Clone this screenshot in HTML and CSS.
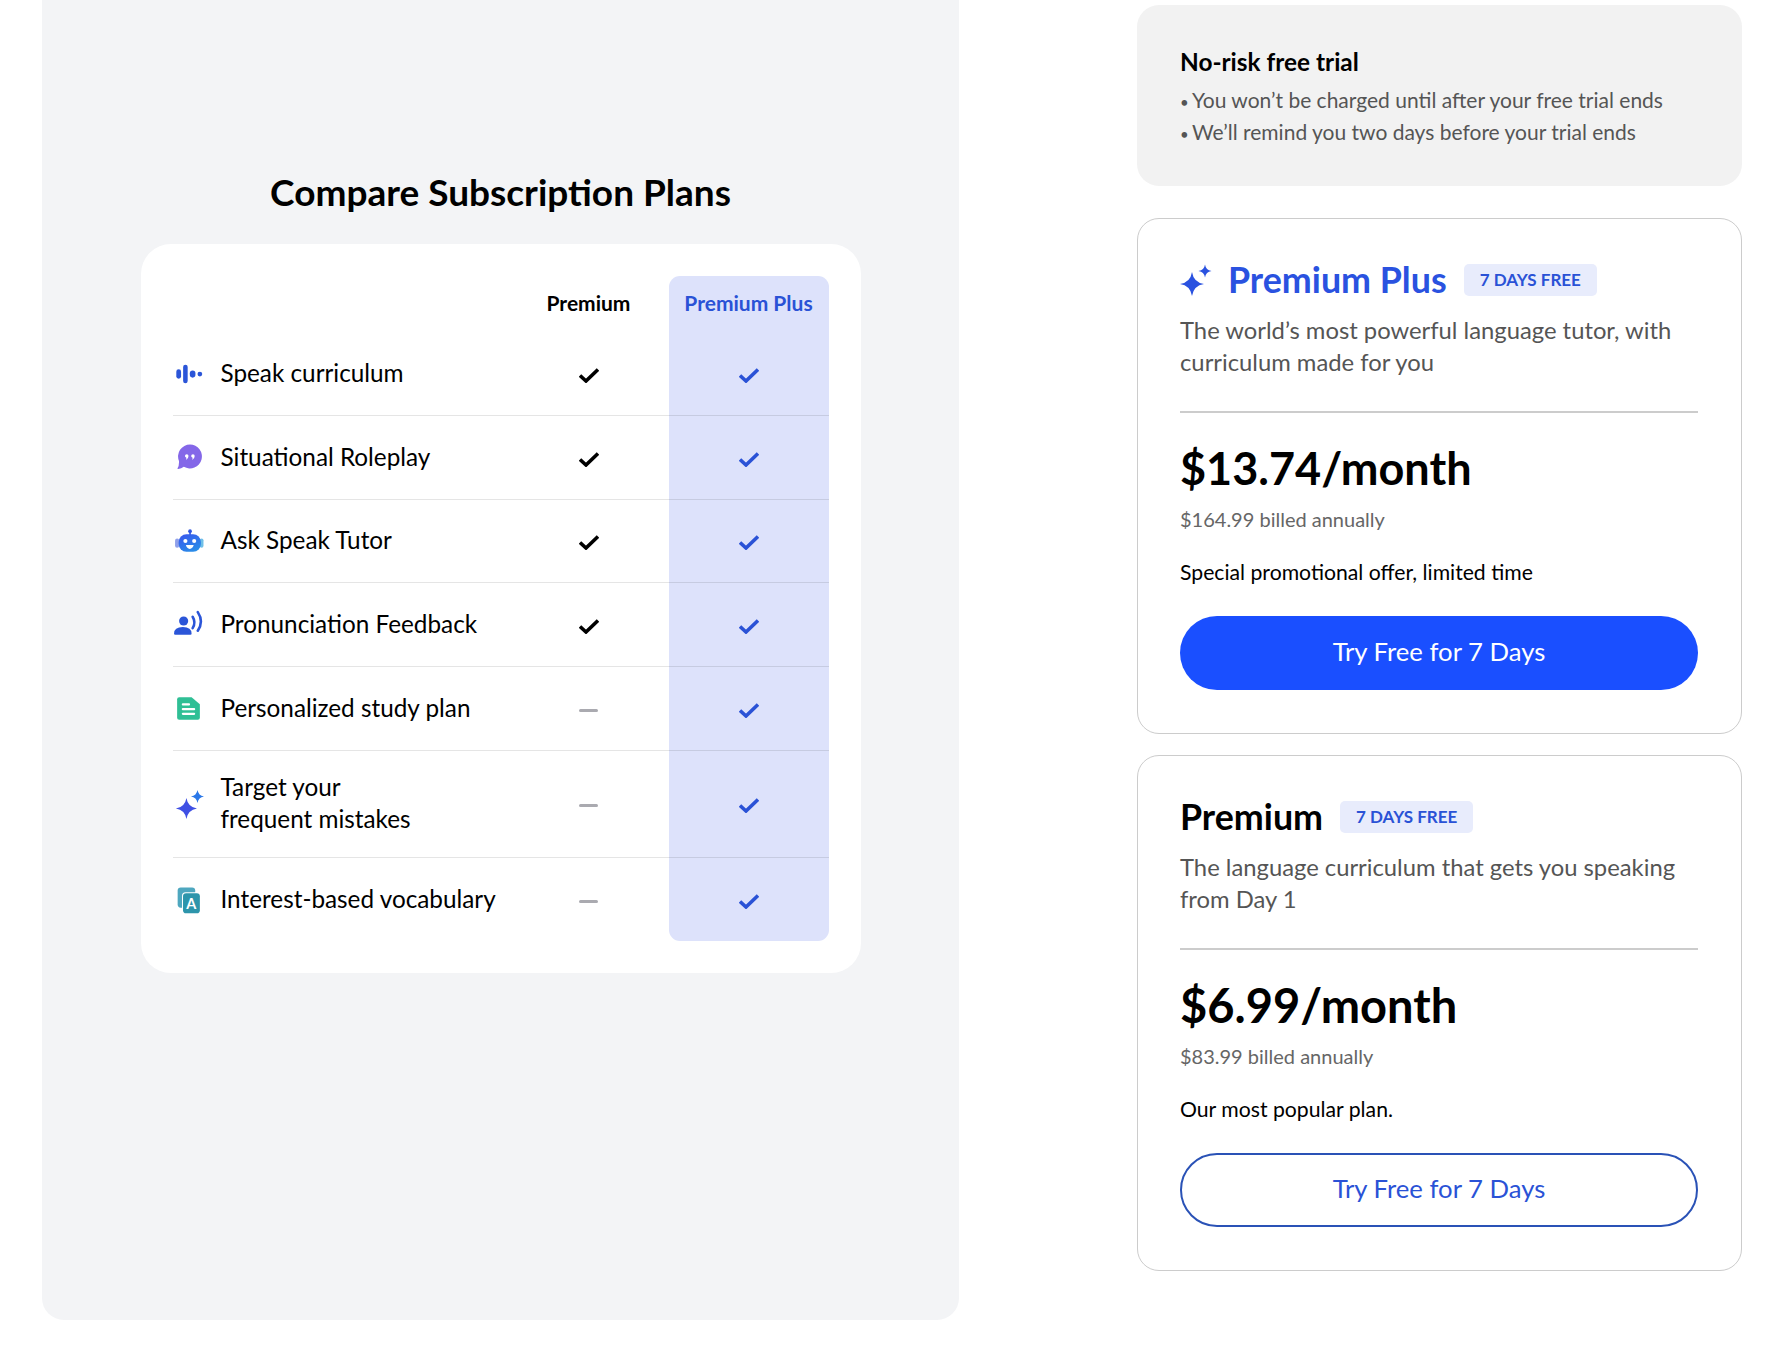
FILE: index.html
```html
<!DOCTYPE html>
<html lang="en">
<head>
    <meta charset="UTF-8">
    <meta name="viewport" content="width=device-width, initial-scale=1.0">
    <link rel="stylesheet" href="styles.css">
    <title>Compare Subscription Plans</title>
</head>
<body>
    <!-- Check mark used in every table row -->
    <svg class="defs">
        <symbol id="check" viewBox="0 0 20 15">
            <path d="M1 7.5 L7 13 L19 1.5" fill="none" stroke="currentColor" stroke-width="3.6"/>
        </symbol>
    </svg>

    <main class="compare">
        <h1 class="compare-title">Compare Subscription Plans</h1>
        <div class="compare-card">
            <table class="compare-table">
                <thead>
                    <tr>
                        <th class="col-feature"></th>
                        <th class="col-premium">Premium</th>
                        <th class="col-plus">Premium Plus</th>
                    </tr>
                </thead>
                <tbody>
                    <tr>
                        <td>
                            <div class="feature">
                                <svg class="feature-icon" viewBox="0 0 30 30">
                                    <rect x="3.2" y="11" width="4.6" height="9" rx="2.3" fill="#2b55d8"/>
                                    <rect x="9.8" y="6.5" width="4.4" height="18" rx="2.2" fill="#2b55d8"/>
                                    <rect x="16.3" y="12" width="5.4" height="7" rx="2.7" fill="#2b55d8"/>
                                    <circle cx="26" cy="15.5" r="2.3" fill="#2b55d8"/>
                                </svg>
                                <span>Speak curriculum</span>
                            </div>
                        </td>
                        <td><svg class="check"><use href="#check"/></svg></td>
                        <td class="plus-cell"><svg class="check"><use href="#check"/></svg></td>
                    </tr>
                    <tr>
                        <td>
                            <div class="feature">
                                <svg class="feature-icon" viewBox="0 0 30 30">
                                    <path d="M16.5 2.4 A11.6 11.6 0 1 1 10.5 24 Q7.5 26.4 4.2 26 Q6 23.8 5.8 18.5 A11.6 11.6 0 0 1 16.5 2.4Z" fill="#8467e8"/>
                                    <path d="M11.6 13.5 a1.7 1.7 0 1 1 3.4 0 q0 2.5 -2.4 4 q0.6 -1.5 0.2 -2.4 a1.7 1.7 0 0 1 -1.2 -1.6Z" fill="#fff"/>
                                    <path d="M17.6 13.5 a1.7 1.7 0 1 1 3.4 0 q0 2.5 -2.4 4 q0.6 -1.5 0.2 -2.4 a1.7 1.7 0 0 1 -1.2 -1.6Z" fill="#fff"/>
                                </svg>
                                <span>Situational Roleplay</span>
                            </div>
                        </td>
                        <td><svg class="check"><use href="#check"/></svg></td>
                        <td class="plus-cell"><svg class="check"><use href="#check"/></svg></td>
                    </tr>
                    <tr class="row-short">
                        <td>
                            <div class="feature">
                                <svg class="feature-icon" viewBox="0 0 30 30">
                                    <defs>
                                        <linearGradient id="botFill" x1="0" y1="0" x2="0.6" y2="1">
                                            <stop offset="0" stop-color="#3a55ee"/>
                                            <stop offset="1" stop-color="#2a8ce8"/>
                                        </linearGradient>
                                    </defs>
                                    <rect x="2" y="12" width="4" height="9" rx="2" fill="#8fa0ea"/>
                                    <rect x="26" y="12" width="3.5" height="9" rx="1.8" fill="#6fc0e8"/>
                                    <circle cx="16.5" cy="5" r="1.8" fill="#2f55e0"/>
                                    <rect x="15.7" y="5" width="1.6" height="4" fill="#2f55e0"/>
                                    <rect x="5.5" y="8" width="21.5" height="17" rx="7.5" fill="url(#botFill)"/>
                                    <circle cx="12" cy="14.5" r="2" fill="#fff"/>
                                    <circle cx="20.5" cy="14.5" r="2" fill="#fff"/>
                                    <path d="M12.5 18.5 H20 Q19 22.2 16.2 22.2 Q13.5 22.2 12.5 18.5Z" fill="#fff"/>
                                </svg>
                                <span>Ask Speak Tutor</span>
                            </div>
                        </td>
                        <td><svg class="check"><use href="#check"/></svg></td>
                        <td class="plus-cell"><svg class="check"><use href="#check"/></svg></td>
                    </tr>
                    <tr>
                        <td>
                            <div class="feature">
                                <svg class="feature-icon" viewBox="0 0 30 30">
                                    <circle cx="10.3" cy="11.6" r="4.4" fill="#2b55d8"/>
                                    <path d="M1 24 Q1 17.5 9.5 17.5 Q18 17.5 18 24 Q18 25 16.8 25 H2.2 Q1 25 1 24Z" fill="#2b55d8"/>
                                    <path d="M19 7.5 Q22.4 13 19 18.5" fill="none" stroke="#2b55d8" stroke-width="2.5" stroke-linecap="round"/>
                                    <path d="M24 3 Q30 12 24 21" fill="none" stroke="#2b55d8" stroke-width="2.5" stroke-linecap="round"/>
                                </svg>
                                <span>Pronunciation Feedback</span>
                            </div>
                        </td>
                        <td><svg class="check"><use href="#check"/></svg></td>
                        <td class="plus-cell"><svg class="check"><use href="#check"/></svg></td>
                    </tr>
                    <tr>
                        <td>
                            <div class="feature">
                                <svg class="feature-icon" viewBox="0 0 30 30">
                                    <path d="M6 4 H18 L26 11 V24 Q26 26 24 26 H6 Q4 26 4 24 V6 Q4 4 6 4Z" fill="#2fbf95"/>
                                    <rect x="8.5" y="10" width="8" height="2.2" rx="1" fill="#fff"/>
                                    <rect x="8.5" y="14.5" width="13" height="2.2" rx="1" fill="#fff"/>
                                    <rect x="8.5" y="19" width="13" height="2.2" rx="1" fill="#fff"/>
                                </svg>
                                <span>Personalized study plan</span>
                            </div>
                        </td>
                        <td><span class="dash"></span></td>
                        <td class="plus-cell"><svg class="check"><use href="#check"/></svg></td>
                    </tr>
                    <tr class="row-tall">
                        <td>
                            <div class="feature">
                                <svg class="feature-icon" viewBox="0 0 30 30">
                                    <path d="M13 8.7 Q14.4 17.5 23.2 18.9 Q14.4 20.3 13 29.1 Q11.6 20.3 2.8 18.9 Q11.6 17.5 13 8.7Z" fill="#3f50e4"/>
                                    <path d="M23.7 0.9 Q24.6 6.3 30 7.2 Q24.6 8.1 23.7 13.5 Q22.8 8.1 17.4 7.2 Q22.8 6.3 23.7 0.9Z" fill="#2b78e8"/>
                                </svg>
                                <span>Target your<br>frequent mistakes</span>
                            </div>
                        </td>
                        <td><span class="dash"></span></td>
                        <td class="plus-cell"><svg class="check"><use href="#check"/></svg></td>
                    </tr>
                    <tr>
                        <td>
                            <div class="feature">
                                <svg class="feature-icon" viewBox="0 0 30 30">
                                    <rect x="4.5" y="3.4" width="17" height="19.5" rx="3" fill="#4ea7bf"/>
                                    <rect x="8.7" y="7.9" width="18.3" height="21.4" rx="3.5" fill="#fff"/>
                                    <rect x="9.7" y="8.9" width="16.3" height="19.4" rx="3" fill="#2d95ab"/>
                                    <text class="vocab-letter" x="17.8" y="24" text-anchor="middle">A</text>
                                </svg>
                                <span>Interest-based vocabulary</span>
                            </div>
                        </td>
                        <td><span class="dash"></span></td>
                        <td class="plus-cell"><svg class="check"><use href="#check"/></svg></td>
                    </tr>
                </tbody>
            </table>
        </div>
    </main>

    <aside class="plans">
        <section class="trial">
            <h3>No-risk free trial</h3>
            <p><span class="bullet">•</span>You won’t be charged until after your free trial ends</p>
            <p><span class="bullet">•</span>We’ll remind you two days before your trial ends</p>
        </section>

        <section class="plan plan-plus">
            <div class="plan-head">
                <svg class="plan-spark" viewBox="0 0 32 32">
                    <path d="M12 8 Q13.6 18.4 24 20 Q13.6 21.6 12 32 Q10.4 21.6 0 20 Q10.4 18.4 12 8Z" fill="#2a52e0"/>
                    <path d="M25 0.5 Q25.8 6.2 31.5 7 Q25.8 7.8 25 13.5 Q24.2 7.8 18.5 7 Q24.2 6.2 25 0.5Z" fill="#2a52e0"/>
                </svg>
                <h2>Premium Plus</h2>
                <span class="badge">7 DAYS FREE</span>
            </div>
            <p class="plan-desc">The world’s most powerful language tutor, with curriculum made for you</p>
            <hr>
            <div class="plan-price">$13.74/month</div>
            <div class="plan-billed">$164.99 billed annually</div>
            <div class="plan-note">Special promotional offer, limited time</div>
            <button type="button" class="btn btn-solid">Try Free for 7 Days</button>
        </section>

        <section class="plan">
            <div class="plan-head">
                <h2>Premium</h2>
                <span class="badge">7 DAYS FREE</span>
            </div>
            <p class="plan-desc">The language curriculum that gets you speaking from Day 1</p>
            <hr>
            <div class="plan-price">$6.99/month</div>
            <div class="plan-billed">$83.99 billed annually</div>
            <div class="plan-note">Our most popular plan.</div>
            <button type="button" class="btn btn-outline">Try Free for 7 Days</button>
        </section>
    </aside>
</body>
</html>
```

FILE: styles.css
```css
body {
    font-family: "Lato", "Noto Sans", sans-serif;
    background-color: #fff;
    color: #000;
    margin: 0;
    padding: 0;
    display: flex;
    justify-content: space-between;
    align-items: flex-start;
    height: 1350px;
    overflow: hidden;
}

.defs {
    display: none;
}

.compare {
    width: 917px;
    height: 1320px;
    margin-left: 42px;
    padding-top: 168px;
    box-sizing: border-box;
    background-color: #f3f4f6;
    border-radius: 0 0 22px 22px;
}

.compare-title {
    margin: 0 0 28px;
    font-size: 37px;
    line-height: 48px;
    font-weight: 700;
    text-align: center;
}

.compare-card {
    width: 720px;
    margin: 0 auto;
    padding: 32px;
    box-sizing: border-box;
    background-color: #fff;
    border-radius: 30px;
}

.compare-table {
    width: 100%;
    border-collapse: separate;
    border-spacing: 0;
    table-layout: fixed;
}

.compare-table th {
    height: 56px;
    padding: 0 0 3px;
    box-sizing: border-box;
    font-size: 21px;
    font-weight: 700;
}

.col-feature {
    width: 336px;
}

th.col-plus {
    color: #2a52d6;
    background-color: #dde2fb;
    border-radius: 11px 11px 0 0;
}

.compare-table td {
    height: 83px;
    padding: 0;
    text-align: center;
    border-bottom: 1px solid rgba(0, 0, 0, 0.1);
}

.row-short td {
    height: 82px;
}

.compare-table .row-tall td {
    height: 106px;
}

.compare-table tbody tr:last-child td {
    border-bottom: none;
}

.compare-table td.plus-cell {
    color: #2a52d6;
    background-color: #dde2fb;
}

.compare-table tbody tr:last-child td.plus-cell {
    border-radius: 0 0 11px 11px;
}

.feature {
    display: flex;
    align-items: center;
    gap: 17px;
    text-align: left;
    font-size: 24.3px;
    line-height: 32px;
}

.feature span {
    margin-bottom: 2px;
}

.feature-icon {
    width: 31px;
    height: 31px;
    flex-shrink: 0;
}

.vocab-letter {
    font-family: "Lato", sans-serif;
    font-size: 14px;
    font-weight: 700;
    fill: #fff;
}

.check {
    display: block;
    width: 20px;
    height: 15px;
    margin: 3px auto 0;
}

.dash {
    display: block;
    width: 19px;
    height: 3px;
    margin: 3px auto 0;
    background-color: #aaaab0;
    border-radius: 2px;
}

.plans {
    width: 605px;
    margin-right: 40px;
    padding-top: 5px;
}

.trial {
    height: 181px;
    margin-bottom: 32px;
    padding: 43px 43px 0;
    box-sizing: border-box;
    background-color: #f2f2f2;
    border-radius: 22px;
}

.trial h3 {
    margin: 0 0 10px;
    font-size: 24.4px;
    line-height: 28px;
    font-weight: 700;
}

.trial p {
    margin: 0 0 2px;
    font-size: 21px;
    line-height: 28px;
    color: #555;
}

.bullet {
    display: inline-block;
    width: 12px;
    font-size: 15px;
}

.plan {
    height: 516px;
    margin-bottom: 21px;
    padding: 40px 43px 0 42px;
    box-sizing: border-box;
    border: 1px solid #ccc;
    border-radius: 22px;
}

.plan-head {
    display: flex;
    align-items: center;
    gap: 17px;
    height: 42px;
}

.plan-head h2 {
    margin: 0;
    font-size: 35.8px;
    line-height: 42px;
    font-weight: 700;
}

.plan-plus h2 {
    color: #2a52e0;
}

.plan-spark {
    width: 32px;
    height: 32px;
    margin-right: -1px;
}

.badge {
    height: 32px;
    padding: 0 16px;
    font-size: 17px;
    line-height: 32px;
    font-weight: 700;
    color: #2a52d6;
    background-color: #e8ecfc;
    border-radius: 5px;
}

.plan-desc {
    margin: 13px 0 33px;
    font-size: 23.8px;
    line-height: 32px;
    color: #555;
}

.plan hr {
    margin: 0;
    height: 2px;
    border: none;
    background-color: #ccc;
}

.plan-price {
    margin-top: 27px;
    font-size: 47px;
    line-height: 56px;
    font-weight: 700;
}

.plan-plus .plan-price {
    font-size: 45px;
}

.plan-billed {
    margin-top: 9px;
    font-size: 20px;
    line-height: 28px;
    color: #666;
}

.plan-note {
    margin-top: 25px;
    font-size: 21.2px;
    line-height: 28px;
}

.btn {
    display: block;
    width: 100%;
    height: 74px;
    margin-top: 30px;
    padding: 0 0 4px;
    font-family: inherit;
    font-size: 25.7px;
    border-radius: 37px;
    cursor: pointer;
}

.btn-solid {
    color: #fff;
    background-color: #1a4fff;
    border: none;
}

.btn-outline {
    color: #2a52d6;
    background-color: #fff;
    border: 2px solid #2a52b6;
}
```
